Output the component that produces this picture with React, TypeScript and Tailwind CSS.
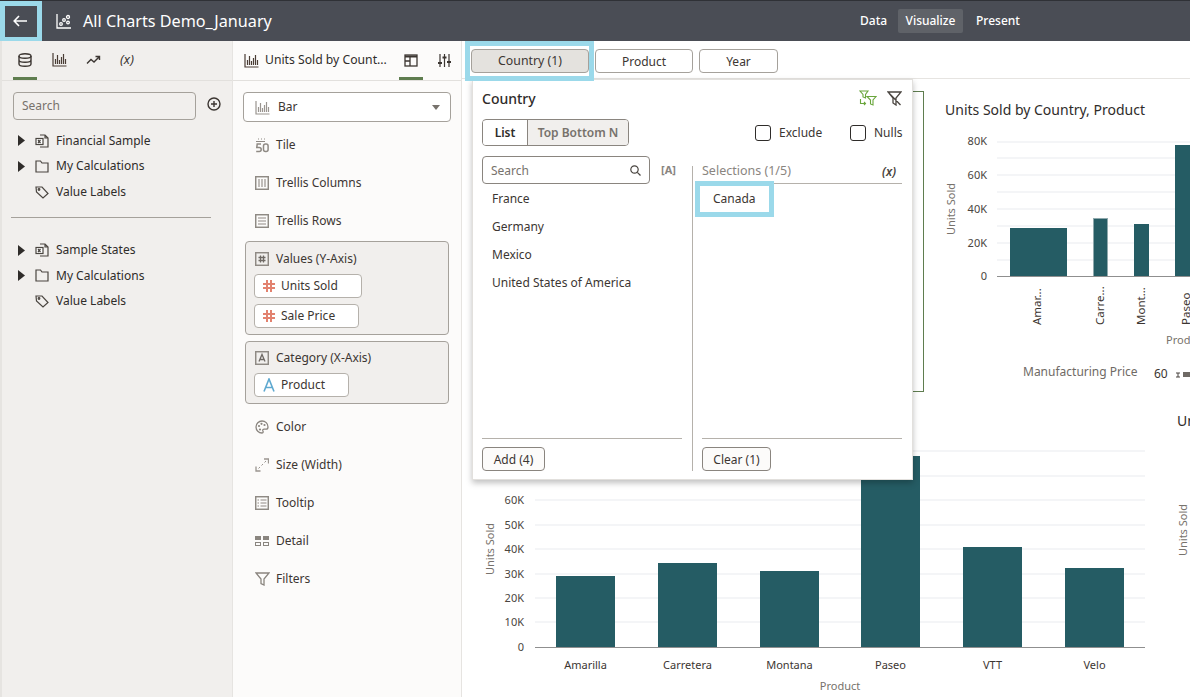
import React from 'react';

const teal = '#255c64';

const BarsIcon = ({ light }: { light?: boolean }) => (
  <svg width="15" height="15" viewBox="0 0 15 15" fill="none" stroke={light ? '#9a9590' : '#4a3d35'} strokeWidth="1.200">
    <path d="M1 1v13h13.500" />
    <path d="M3.500 12V7M5.500 12V3M7.500 12V8M9.500 12V5M11.500 12V2M13.500 12V7" />
  </svg>
);

const IconBox = ({ children }: { children: React.ReactNode }) => (
  <svg width="14" height="14" viewBox="0 0 14 14" fill="none" stroke="#8f8a84" strokeWidth="1.100">
    {children}
  </svg>
);

const TileIcon = () => (
  <svg width="14" height="15" viewBox="0 0 14 15" fill="none" stroke="#8f8a84" strokeWidth="1.500">
    <path d="M3 1h1M6 1h1M9 1h1M1 3.500h9" strokeWidth="1" />
    <path d="M6 6H2.200L1.800 9.500h2.400a2 2 0 0 1 0 4H1.200" />
    <rect x="8.500" y="6" width="4.600" height="7.500" rx="2" />
  </svg>
);

const TrellisCols = () => (
  <IconBox>
    <rect x="0.700" y="0.700" width="12.600" height="12.600" strokeWidth="1.500" />
    <path d="M4 3v8M7 3v8M10 3v8" />
  </IconBox>
);

const TrellisRows = () => (
  <IconBox>
    <rect x="0.700" y="0.700" width="12.600" height="12.600" strokeWidth="1.500" />
    <path d="M3 4h8M3 7h8M3 10h8" />
  </IconBox>
);

const ValuesIcon = () => (
  <IconBox>
    <rect x="0.700" y="0.700" width="12.600" height="12.600" strokeWidth="1.500" />
    <path d="M5.500 3.500v7M8.500 3.500v7M3.500 5.500h7M3.500 8.500h7" stroke="#6f6a65" strokeWidth="1.300" />
  </IconBox>
);

const CategoryIcon = () => (
  <IconBox>
    <rect x="0.700" y="0.700" width="12.600" height="12.600" strokeWidth="1.500" />
    <path d="M4 10.500 7 3.500l3 7M5 8.500h4" stroke="#6f6a65" strokeWidth="1.300" />
  </IconBox>
);

const ColorIcon = () => (
  <svg width="14" height="14" viewBox="0 0 14 14" fill="none" stroke="#8a857f" strokeWidth="1.300">
    <path d="M7 1a6 6 0 1 0 0 12c1.500 0 1.300-1.400.9-2-.5-1 .1-1.800 1.200-1.800H11c1.400 0 2-1 2-2.300C13 3.400 10.300 1 7 1Z" />
    <circle cx="4" cy="6" r="1.100" fill="#8a857f" stroke="none" />
    <circle cx="6.500" cy="3.800" r="1.100" fill="#8a857f" stroke="none" />
    <circle cx="9.500" cy="5" r="1.100" fill="#8a857f" stroke="none" />
    <circle cx="5" cy="9.500" r="1.100" fill="#8a857f" stroke="none" />
  </svg>
);

const SizeIcon = () => (
  <svg width="14" height="14" viewBox="0 0 14 14" fill="none" stroke="#9a9590" strokeWidth="1.300">
    <path d="M1 8.500V13h4.500M9 1h4.500v4.500" />
    <path d="M3.500 10.500l1.500-1.500M6.500 7.500 8 6M9.500 4.500 11 3" strokeWidth="1" />
  </svg>
);

const TooltipIcon = () => (
  <IconBox>
    <rect x="0.700" y="0.700" width="12.600" height="12.600" strokeWidth="1.500" />
    <path d="M2.500 4h1.500M2.500 7h1.500M2.500 10h1.500M5.500 4h6M5.500 7h6M5.500 10h6" />
  </IconBox>
);

const DetailIcon = () => (
  <svg width="14" height="12" viewBox="0 0 14 12" fill="#8a857f">
    <rect x="0" y="1" width="6" height="4" />
    <rect x="8" y="1" width="6" height="4" />
    <path d="M0 7h6v4H0zM1 8v2h4V8zM8 7h6v4H8zM9 8v2h4V8z" fillRule="evenodd" />
  </svg>
);

const FilterIcon = ({ color = '#8a857f' }: { color?: string }) => (
  <svg width="15" height="14" viewBox="0 0 15 14" fill="none" stroke={color} strokeWidth="1.300">
    <path d="M1 1h13L9 7v6l-3-1.500V7Z" />
  </svg>
);

const Row = ({ icon, label, className }: { icon: React.ReactNode; label: string; className: string }) => (
  <div className={`flex h-[18px] items-center ${className}`}>
    <span className="flex w-[21px] justify-start">{icon}</span>
    <span>{label}</span>
  </div>
);

const Chip = ({ kind, label, width }: { kind: 'num' | 'text'; label: string; width: string }) => (
  <div className={`flex h-[24px] items-center rounded-[4px] border border-[#b5b1ab] bg-white pl-[8px] ${width}`}>
    {kind === 'num' ? (
      <svg width="12" height="12" viewBox="0 0 12 12" stroke="#e2826f" strokeWidth="2" className="mr-[6px]">
        <path d="M4 0v12M8 0v12M0 4h12M0 8h12" />
      </svg>
    ) : (
      <svg width="12" height="14" viewBox="0 0 12 14" fill="none" stroke="#5fa9d0" strokeWidth="1.600" className="mr-[6px]">
        <path d="M1 13.500 6 1l5 12.500M2.500 9.500h7" />
      </svg>
    )}
    <span>{label}</span>
  </div>
);

const TreeRow = ({ icon, label, caret }: { icon: 'db' | 'folder' | 'tag'; label: string; caret?: boolean }) => (
  <div className="flex h-[25.500px] items-center pl-[16px]">
    <span className="flex w-[17px]">
      {caret && (
        <svg width="7" height="11" viewBox="0 0 7 11" fill="#2f2c2a">
          <path d="M0 0l7 5.500L0 11Z" />
        </svg>
      )}
    </span>
    <span className="flex w-[21px]">
      {icon === 'db' && (
        <svg width="14" height="14" viewBox="0 0 14 14" fill="none" stroke="#4a4540" strokeWidth="1.200">
          <path d="M5 1h5l3 3v9H5M10 1v3h3" />
          <rect x="1" y="4.500" width="7" height="6" fill="#fff" />
          <path d="M3 6l2.500 3M5.500 6 3 9" />
        </svg>
      )}
      {icon === 'folder' && (
        <svg width="14" height="13" viewBox="0 0 14 13" fill="none" stroke="#4a4540" strokeWidth="1.200">
          <path d="M1 1h4.500l1.500 2h6v9H1Z" />
        </svg>
      )}
      {icon === 'tag' && (
        <svg width="14" height="14" viewBox="0 0 14 14" fill="none" stroke="#4a4540" strokeWidth="1.200">
          <path d="M1 2h6l6 6.500L8 13 1.500 7Z" />
          <circle cx="4" cy="4.500" r="0.800" />
        </svg>
      )}
    </span>
    <span>{label}</span>
  </div>
);

const LeftPanel = () => (
  <aside className="flex w-[233px] shrink-0 flex-col border-l-[2px] border-r border-[#e6e4e1] bg-[#f1efed]">
    <div className="flex h-[40px] shrink-0 items-center border-b-[1px] border-[#e2e0dd] pb-[2px]">
      <div className="relative flex h-[39px] w-[24px] ml-[11px] items-center justify-center">
        <svg width="14" height="14" viewBox="0 0 14 14" fill="none" stroke="#3c3632" strokeWidth="1.400">
          <ellipse cx="7" cy="3" rx="6" ry="2.200" />
          <path d="M1 3v8c0 1.200 2.700 2.200 6 2.200s6-1 6-2.200V3M1 7c0 1.200 2.700 2.200 6 2.200S13 8.200 13 7" />
        </svg>
        <span className="absolute bottom-[-1px] left-0 h-[3px] w-[24px] bg-[#5f7d4f]" />
      </div>
      <span className="ml-[10px] flex w-[24px] justify-center"><BarsIcon /></span>
      <span className="ml-[10px] flex w-[24px] justify-center">
        <svg width="15" height="10" viewBox="0 0 15 10" fill="none" stroke="#3c3632" strokeWidth="1.400">
          <path d="M1 8.500l4-4 3 2.500 5-5M9.500 1.500H13.500V5" />
        </svg>
      </span>
      <span className="ml-[10px] w-[24px] text-center text-[13px] italic text-[#3c3632]">(x)</span>
    </div>
    <div className="flex items-center pl-[11px] pt-[11px]">
      <div className="flex h-[28px] w-[183px] items-center rounded-[4px] border border-[#a5a19b] pl-[8px] text-[12px] text-[#77726c]">Search</div>
      <svg width="14" height="14" viewBox="0 0 14 14" fill="none" stroke="#3c3632" strokeWidth="1.400" className="ml-[11px] -translate-y-[2px]">
        <circle cx="7" cy="7" r="6" />
        <path d="M7 4v6M4 7h6" />
      </svg>
    </div>
    <div className="pt-[8px] text-[12px] text-[#2f2c2a]">
      <TreeRow icon="db" label="Financial Sample" caret />
      <TreeRow icon="folder" label="My Calculations" caret />
      <TreeRow icon="tag" label="Value Labels" />
      <div className="mx-[9px] mb-[20px] mt-[12px] h-px w-[200px] bg-[#a5a19b]" />
      <TreeRow icon="db" label="Sample States" caret />
      <TreeRow icon="folder" label="My Calculations" caret />
      <TreeRow icon="tag" label="Value Labels" />
    </div>
  </aside>
);

const SecondPanel = () => (
  <aside className="flex w-[229px] shrink-0 flex-col border-r border-[#e6e4e1] bg-[#fcfbfa] text-[12px] text-[#3c3632]">
    <div className="flex h-[40px] shrink-0 items-center border-b border-[#e2e0dd] pl-[11px]">
      <BarsIcon />
      <span className="ml-[6px] w-[134px] truncate text-[12.200px] text-[#2f2c2a]">Units Sold by Count...</span>
      <div className="relative flex h-[39px] w-[24px] items-center justify-center">
        <svg width="14" height="13" viewBox="0 0 14 13" fill="none" stroke="#3c3632" strokeWidth="1.300">
          <rect x="1" y="1" width="12" height="11" />
          <path d="M1 2.500h12" strokeWidth="2" />
          <path d="M6 3v9M1 7h5" />
        </svg>
        <span className="absolute bottom-0 left-0 h-[3px] w-[24px] bg-[#5f7d4f]" />
      </div>
      <span className="ml-[9px] flex w-[24px] justify-center">
        <svg width="13" height="13" viewBox="0 0 13 13" fill="none" stroke="#3c3632" strokeWidth="1.200">
          <path d="M2 0v13M6.500 0v13M11 0v13" />
          <path d="M0 9h4M4.500 3.500h4M9 8h4" strokeWidth="2" />
        </svg>
      </span>
    </div>
    <div className="px-[10px] pt-[11px]">
      <div className="flex h-[30px] w-[208px] items-center rounded-[4px] border border-[#a5a19b] bg-white pl-[11px] pr-[10px]">
        <BarsIcon light />
        <span className="ml-[8px] flex-1">Bar</span>
        <svg width="8" height="5" viewBox="0 0 8 5" fill="#77726c"><path d="M0 0h8L4 5Z" /></svg>
      </div>
      <Row icon={<TileIcon />} label="Tile" className="ml-[12px] mt-[14px]" />
      <Row icon={<TrellisCols />} label="Trellis Columns" className="ml-[12px] mt-[20px]" />
      <Row icon={<TrellisRows />} label="Trellis Rows" className="ml-[12px] mt-[20px]" />
      <div className="ml-[2px] mt-[11px] h-[94px] w-[204px] rounded-[4px] border border-[#a5a19b] bg-[#f1efed] px-[8px] pt-[8px]">
        <Row icon={<ValuesIcon />} label="Values (Y-Axis)" className="ml-px" />
        <div className="mt-[6px]"><Chip kind="num" label="Units Sold" width="w-[108px]" /></div>
        <div className="mt-[6px]"><Chip kind="num" label="Sale Price" width="w-[105px]" /></div>
      </div>
      <div className="ml-[2px] mt-[6px] h-[63px] w-[204px] rounded-[4px] border border-[#a5a19b] bg-[#f1efed] px-[8px] pt-[7px]">
        <Row icon={<CategoryIcon />} label="Category (X-Axis)" className="ml-px" />
        <div className="mt-[6px]"><Chip kind="text" label="Product" width="w-[95px]" /></div>
      </div>
      <Row icon={<ColorIcon />} label="Color" className="ml-[12px] mt-[14px]" />
      <Row icon={<SizeIcon />} label="Size (Width)" className="ml-[12px] mt-[20px]" />
      <Row icon={<TooltipIcon />} label="Tooltip" className="ml-[12px] mt-[20px]" />
      <Row icon={<DetailIcon />} label="Detail" className="ml-[12px] mt-[20px]" />
      <Row icon={<FilterIcon />} label="Filters" className="ml-[12px] mt-[20px]" />
    </div>
  </aside>
);

const RightChart = () => {
  const lines = [142, 158, 175, 192, 209, 226, 243, 260];
  const ticks: [string, number][] = [['80K', 141], ['60K', 175], ['40K', 209], ['20K', 243], ['0', 276]];
  return (
    <svg width="266" height="301" viewBox="924 91 266 301" className="block font-['Noto_Sans',sans-serif]">
      <text x="945" y="115" fontSize="14" fill="#2f2c2a">Units Sold by Country, Product</text>
      {lines.map((y) => <line key={y} x1="997" x2="1190" y1={y} y2={y} stroke="#e9ebef" strokeWidth="1" />)}
      {ticks.map(([t, y]) => <text key={t} x="987" y={y + 4} fontSize="11" fill="#4a4540" textAnchor="end">{t}</text>)}
      <text transform="translate(955 209) rotate(-90)" fontSize="11" fill="#77726c" textAnchor="middle">Units Sold</text>
      <rect x="1010" y="228" width="57" height="48" fill={teal} />
      <rect x="1093.500" y="218.500" width="14" height="58" fill={teal} stroke="#8fa9ad" />
      <rect x="1134" y="224" width="15" height="52" fill={teal} />
      <rect x="1175" y="145" width="15" height="131" fill={teal} />
      <line x1="997" x2="1190" y1="276.500" y2="276.500" stroke="#8f8f8f" />
      {[['Amar...', 1041], ['Carre...', 1104], ['Mont...', 1145], ['Paseo', 1190]].map(([t, x]) => (
        <text key={t} transform={`translate(${x} 325) rotate(-90)`} fontSize="11.500" fill="#3c3632">{t}</text>
      ))}
      <text x="1166" y="344" fontSize="11" fill="#77726c">Product</text>
      <text x="1023" y="376" fontSize="12" fill="#6f6a65">Manufacturing Price</text>
      <text x="1154" y="378" fontSize="12" fill="#3c3632">60</text>
      <path d="M1176 373h4M1176 377h4M1178 373v4" stroke="#4a4540" fill="none" />
      <rect x="1183" y="372" width="7" height="5" fill="#6f6a65" />
    </svg>
  );
};

const BottomChart = () => {
  const lines = [451, 476, 500, 525, 549, 574, 598, 622];
  const ticks: [string, number][] = [['60K', 500], ['50K', 525], ['40K', 549], ['30K', 574], ['20K', 598], ['10K', 622], ['0', 647]];
  const bars: [string, number, number][] = [
    ['Amarilla', 556, 576],
    ['Carretera', 658, 563],
    ['Montana', 760, 571],
    ['Paseo', 861, 456],
    ['VTT', 963, 547],
    ['Velo', 1065, 568],
  ];
  return (
    <svg width="698" height="305" viewBox="462 392 698 305" className="block font-['Noto_Sans',sans-serif]">
      {lines.map((y) => <line key={y} x1="535" x2="1145" y1={y} y2={y} stroke="#e9ebef" />)}
      {ticks.map(([t, y]) => <text key={t} x="524" y={y + 4} fontSize="11" fill="#4a4540" textAnchor="end">{t}</text>)}
      <text transform="translate(494 549) rotate(-90)" fontSize="11" fill="#77726c" textAnchor="middle">Units Sold</text>
      {bars.map(([name, x, y]) => (
        <g key={name}>
          <rect x={x} y={y} width="59" height={647 - y} fill={teal} />
          <text x={x + 29.500} y="669" fontSize="11" fill="#3c3632" textAnchor="middle">{name}</text>
        </g>
      ))}
      <line x1="535" x2="1145" y1="647.500" y2="647.500" stroke="#8f8f8f" />
      <text x="840" y="690" fontSize="11" fill="#77726c" textAnchor="middle">Product</text>
    </svg>
  );
};

const Popover = () => (
  <div className="absolute left-[10px] top-[38px] z-20 h-[401px] w-[441px] border border-[#e2e0dd] bg-white text-[12px] text-[#3c3632] shadow-[0_3px_6px_rgba(0,0,0,0.25)]">
    <div className="flex h-[39px] items-center pb-[3px] pl-[9px] pr-[10px]">
      <span className="flex-1 text-[14px] font-medium text-[#2f2c2a]">Country</span>
      <span className="mr-[10px]">
        <svg width="18" height="16" viewBox="0 0 18 16" fill="none" stroke="#6aa63c" strokeWidth="1.100">
          <path d="M1 1h8L6.500 4.500V8L4 7V4.500ZM8 6.500h9L14 10v5l-2.500-1v-4Z" />
          <path d="M1.500 9v4.500H6M5 12l1.500 1.500L5 15" />
        </svg>
      </span>
      <svg width="15" height="15" viewBox="0 0 15 15" fill="none" stroke="#4a4540" strokeWidth="1.300">
        <path d="M1 1h13L9 7v7l-3-2V7ZM1 1l12.500 13" />
      </svg>
    </div>
    <div className="flex h-[27px] items-center pl-[9px]">
      <div className="flex h-[27px] w-[147px] overflow-hidden rounded-[4px] border border-[#8a857f] pt-px font-semibold">
        <span className="flex w-[44px] items-center justify-center bg-white text-[#2f2c2a]">List</span>
        <span className="-mt-px flex flex-1 items-center justify-center border-l border-[#8a857f] bg-[#f1efed] pt-px text-[#77726c]">Top Bottom N</span>
      </div>
      <span className="ml-[126px] h-[16px] w-[16px] rounded-[3px] border border-[#2f2c2a]" />
      <span className="ml-[8px] w-[71px]">Exclude</span>
      <span className="h-[16px] w-[16px] rounded-[3px] border border-[#2f2c2a]" />
      <span className="ml-[8px]">Nulls</span>
    </div>
    <div className="flex h-[325px] pl-[9px] pr-[9px] pt-[10px]">
      <div className="flex w-[200px] flex-col">
        <div className="flex items-center">
          <div className="flex h-[28px] w-[168px] items-center rounded-[4px] border border-[#8a857f] pl-[8px] pr-[8px] pt-px text-[#77726c]">
            <span className="flex-1">Search</span>
            <svg width="11" height="11" viewBox="0 0 11 11" fill="none" stroke="#4a4540" strokeWidth="1.200">
              <circle cx="4.500" cy="4.500" r="3.700" />
              <path d="M7.300 7.300 10.500 10.500" />
            </svg>
          </div>
          <span className="ml-[11px] text-[11px] font-bold text-[#8a857f]">[A]</span>
        </div>
        <div className="pl-[10px] pt-[1px]">
          {['France', 'Germany', 'Mexico', 'United States of America'].map((c) => (
            <div key={c} className="flex h-[28px] items-center">{c}</div>
          ))}
        </div>
        <div className="flex-1" />
        <div className="border-t border-[#b5b1ab] pt-[8px]">
          <span className="flex h-[24px] w-[63px] items-center justify-center rounded-[4px] border border-[#8a857f] bg-[#fcfbfa] pt-px">Add (4)</span>
        </div>
      </div>
      <div className="ml-[10px] mt-[10px] w-px bg-[#b5b1ab]" />
      <div className="ml-[9px] flex w-[200px] flex-col">
        <div className="mt-[8px] flex h-[20px] items-center justify-between border-b border-[#b5b1ab] pb-[4px] text-[#8a857f]">
          <span className="text-[12.500px]">Selections (1/5)</span>
          <span className="pr-[6px] font-semibold italic text-[#4a4540]">(x)</span>
        </div>
        <div className="-ml-[7px] -mt-[3px] flex h-[36px] w-[79px] items-center border-[5px] border-[#9bd9ea] pl-[13px]">Canada</div>
        <div className="flex-1" />
        <div className="border-t border-[#b5b1ab] pt-[8px]">
          <span className="flex h-[24px] w-[69px] items-center justify-center rounded-[4px] border border-[#8a857f] bg-[#fcfbfa] pt-px">Clear (1)</span>
        </div>
      </div>
    </div>
  </div>
);

const MainArea = () => (
  <main className="relative min-w-0 flex-1 overflow-hidden bg-white">
    <div className="relative flex h-[38px] items-start border-b border-[#e6e4e1] pl-[3px] text-[12px] text-[#3c3632]">
      <div className="z-30 box-border flex h-[40px] w-[129px] justify-center border-[5px] border-[#9bd9ea] bg-white pt-[3px] pl-[1px]">
        <span className="flex h-[24px] w-[118px] items-center justify-center rounded-[4px] border border-[#a5a19b] bg-[#e4e2de] pt-px text-[12.300px]">Country (1)</span>
      </div>
      <span className="ml-px mt-[8px] flex h-[24px] w-[98px] items-center justify-center rounded-[4px] border border-[#a5a19b] pt-px">Product</span>
      <span className="ml-[6px] mt-[8px] flex h-[24px] w-[79px] items-center justify-center rounded-[4px] border border-[#a5a19b] pt-px">Year</span>
    </div>
    <div className="pt-[12px]">
      <div className="flex h-[301px]">
        <div className="ml-[14px] h-[301px] w-[448px] shrink-0 border border-[#5f7d4f]" />
        <RightChart />
      </div>
      <div className="flex">
        <BottomChart />
        <svg width="30" height="305" viewBox="1160 392 30 305" className="block font-['Noto_Sans',sans-serif]">
          <text x="1177" y="426" fontSize="14" fill="#2f2c2a">Un</text>
          <text transform="translate(1187 530) rotate(-90)" fontSize="11" fill="#77726c" textAnchor="middle">Units Sold</text>
        </svg>
      </div>
    </div>
    <Popover />
  </main>
);

export default function App() {
  return (
    <div className="flex h-[697px] w-[1190px] flex-col overflow-hidden bg-white font-['Noto_Sans',sans-serif]">
      <header className="flex h-[41px] shrink-0 items-center border-t border-[#2f3136] bg-[#4a4d55] text-white">
        <div className="box-border flex h-[41px] w-[42px] items-center justify-center border-[5px] border-[#9bd9ea] bg-[#4a4d55]">
          <svg width="14" height="12" viewBox="0 0 14 12" fill="none" stroke="#fff" strokeWidth="1.600" className="-translate-x-px">
            <path d="M14 6H1.500M6 1 1.200 6 6 11" />
          </svg>
        </div>
        <svg width="15" height="15" viewBox="0 0 15 15" fill="none" stroke="#fff" strokeWidth="1.300" className="ml-[14px]">
          <path d="M1 0v14h14" />
          <circle cx="5" cy="10" r="1.300" />
          <circle cx="8" cy="6" r="1.300" />
          <circle cx="12" cy="3" r="1.500" />
          <circle cx="12" cy="8.500" r="1.300" />
        </svg>
        <span className="ml-[12px] w-[777px] text-[16.200px]">All Charts Demo_January</span>
        <div className="flex items-center text-[12px] font-medium">
          <span className="w-[38px]">Data</span>
          <span className="flex h-[24px] w-[65px] items-center justify-center rounded-[2px] bg-[#5f6268]">Visualize</span>
          <span className="ml-[13px]">Present</span>
        </div>
      </header>
      <div className="flex min-h-0 flex-1">
        <LeftPanel />
        <SecondPanel />
        <MainArea />
      </div>
    </div>
  );
}
